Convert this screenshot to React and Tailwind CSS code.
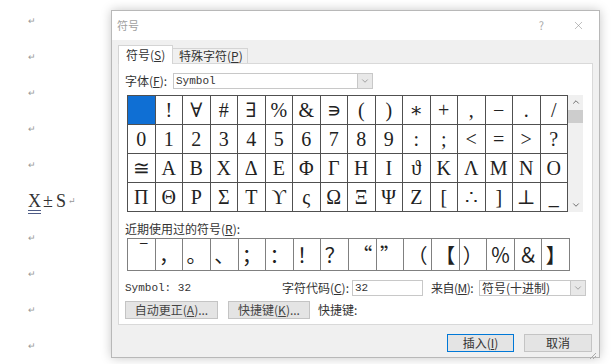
import React from 'react';
import { ChevronDown, ChevronUp, X } from 'lucide-react';

const cjk = "font-['Noto_Sans_CJK_SC',sans-serif]";
const mono = "font-['Liberation_Mono','Noto_Sans_CJK_SC',monospace]";
const serif = "font-['Liberation_Serif','DejaVu_Serif',serif]";

const symbolRows = [
  [' ', '!', '∀', '#', '∃', '%', '&', '∍', '(', ')', '∗', '+', ',', '−', '.', '/'],
  ['0', '1', '2', '3', '4', '5', '6', '7', '8', '9', ':', ';', '<', '=', '>', '?'],
  ['≅', 'Α', 'Β', 'Χ', 'Δ', 'Ε', 'Φ', 'Γ', 'Η', 'Ι', 'ϑ', 'Κ', 'Λ', 'Μ', 'Ν', 'Ο'],
  ['Π', 'Θ', 'Ρ', 'Σ', 'Τ', 'ϒ', 'ς', 'Ω', 'Ξ', 'Ψ', 'Ζ', '[', '∴', ']', '⊥', '_'],
];

const recent = ['ˉ', '，', '。', '、', '；', '：', '！', '？', '“', '”', '（', '【', '）', '％', '＆', '】'];

// Word 文档里的段落标记
function DocColumn() {
  const lines = [0, 1, 2, 3, 4, 'xs', 6, 7, 8, 9];
  return (
    <div className="flex w-[111px] shrink-0 flex-col pl-[28px] pt-[2px]">
      {lines.map((line, i) => (
        <div key={i} className="flex h-[38px] items-center">
          {line === 'xs' ? (
            <span className={`${serif} flex items-center text-[18px] leading-none text-[#333]`}>
              <span className="underline decoration-[#4d5b85] decoration-double underline-offset-[3px]">X</span>
              <span className="ml-[2px]">±</span>
              <span className="ml-[3px]">S</span>
              <span className="ml-[2px] text-[9px] text-[#999]">↵</span>
            </span>
          ) : (
            <span className="text-[9px] leading-none text-[#999]">↵</span>
          )}
        </div>
      ))}
    </div>
  );
}

function SmallButton({ className = '', children }) {
  return (
    <div className={`flex h-[18px] items-center justify-center whitespace-nowrap border border-[#c4c4c4] bg-[#e4e4e4] text-[12px] text-[#444] ${className}`}>
      {children}
    </div>
  );
}

function DropArrow() {
  return (
    <div className="flex h-full w-[15px] items-center justify-center border-l border-[#c8c8c8] bg-[#e8e8e8]">
      <ChevronDown size={10} strokeWidth={1.5} className="text-[#777]" />
    </div>
  );
}

export default function App() {
  return (
    <div className={`${cjk} flex h-[364px] w-[615px] overflow-hidden bg-white`}>
      <DocColumn />

      <div className="mt-[10px] flex h-[348px] w-[489px] shrink-0 flex-col border border-[#b8b8b8] bg-[#f0f0f0] shadow-[0_0_10px_rgba(0,0,0,0.22)]">
        {/* 标题栏 */}
        <div className="flex h-[29px] shrink-0 items-center bg-white pl-[5px] pr-[14px]">
          <span className="text-[11px] text-[#a0a0a0]">符号</span>
          <span className="ml-auto text-[11px] text-[#aaa]">?</span>
          <X size={13} strokeWidth={1} className="ml-[28px] text-[#888]" />
        </div>

        <div className="flex flex-1 flex-col px-[6px]">
          {/* 选项卡 */}
          <div className="mt-[5px] flex h-[18px] items-end">
            <div className="relative z-10 -mb-px flex h-[19px] w-[55px] items-center border border-b-0 border-[#d4d4d4] bg-white pl-[7px] text-[12px] text-[#333]">
              符号(<span className="underline">S</span>)
            </div>
            <div className="flex h-[15px] w-[75px] items-center border border-b-0 border-l-0 border-[#d4d4d4] bg-[#f0f0f0] pl-[6px] text-[12px] text-[#333]">
              特殊字符(<span className="underline">P</span>)
            </div>
          </div>

          {/* 面板 */}
          <div className="flex h-[262px] flex-col border border-[#d9d9d9] bg-white px-[6px] pt-[9px]">
            <div className="flex h-[16px] items-center">
              <span className="w-[48px] text-[12px] text-[#333]">字体(<span className="underline">F</span>):</span>
              <div className="flex h-[16px] w-[200px] items-center border border-[#c8c8c8]">
                <span className={`${mono} flex-1 pl-[2px] text-[11px] text-[#333]`}>Symbol</span>
                <DropArrow />
              </div>
            </div>

            <div className="ml-[2px] mt-[6px] flex">
              <div className="grid w-[441px] grid-cols-16 gap-px border border-[#505050] bg-[#505050]">
                {symbolRows.flat().map((ch, i) => (
                  <div
                    key={i}
                    className={`${serif} flex h-[28px] items-center justify-center text-[20px] leading-none text-[#222] ${i === 0 ? 'bg-[#0f6fd4]' : 'bg-white'}`}
                  >
                    {ch}
                  </div>
                ))}
              </div>
              <div className="flex h-[117px] w-[15px] flex-col items-center bg-[#f0f0f0]">
                <ChevronUp size={10} strokeWidth={2} className="mt-[2px] text-[#555]" />
                <div className="mt-[3px] h-[13px] w-[15px] bg-[#cdcdcd]" />
                <ChevronDown size={10} strokeWidth={2} className="mb-[2px] mt-auto text-[#555]" />
              </div>
            </div>

            <div className="mt-[9px] text-[12px] leading-[16px] text-[#333]">
              近期使用过的符号(<span className="underline">R</span>):
            </div>
            <div className="ml-[2px] mt-px grid w-[443px] grid-cols-16 gap-px border border-[#808080] bg-[#808080]">
              {recent.map((ch, i) => (
                <div
                  key={i}
                  className={`flex h-[31px] text-[20px] leading-none text-[#222] ${i === 0 ? 'items-start justify-end pr-[1px] pt-[1px]' : 'items-center justify-center'} bg-white`}
                >
                  {ch}
                </div>
              ))}
            </div>

            <div className="mt-[9px] flex h-[16px] items-center whitespace-nowrap text-[12px] text-[#333]">
              <span className={`${mono} w-[140px] text-[11px]`}>Symbol: 32</span>
              <span className="w-[84px] text-right">字符代码(<span className="underline">C</span>):</span>
              <div className={`${mono} ml-[3px] flex h-[16px] w-[71px] items-center border border-[#c8c8c8] pl-[2px] text-[11px]`}>32</div>
              <span className="ml-[8px] w-[46px] tracking-[-0.5px]">来自(<span className="underline">M</span>):</span>
              <div className="ml-[2px] flex h-[16px] w-[107px] items-center border border-[#c8c8c8]">
                <span className="flex-1 pl-[2px]">符号(十进制)</span>
                <DropArrow />
              </div>
            </div>

            <div className="mt-[5px] flex items-center">
              <SmallButton className="w-[93px]">自动更正(<span className="underline">A</span>)...</SmallButton>
              <SmallButton className="ml-[10px] w-[82px]">快捷键(<span className="underline">K</span>)...</SmallButton>
              <span className="ml-[8px] text-[12px] text-[#333]">快捷键:</span>
            </div>
          </div>

          {/* 底部按钮 */}
          <div className="mt-[9px] flex justify-end gap-[10px] pr-px">
            <div className="flex h-[18px] w-[67px] items-center justify-center border border-[#0078d7] bg-[#e4e4e4] text-[12px] text-[#333]">
              插入(<span className="underline">I</span>)
            </div>
            <div className="flex h-[18px] w-[68px] items-center justify-center border border-[#c4c4c4] bg-[#e4e4e4] text-[12px] text-[#333]">
              取消
            </div>
          </div>
          <div className="mt-auto flex justify-end pb-[2px]">
            <svg width="8" height="8" viewBox="0 0 8 8" className="-mr-[4px]">
              <path d="M7 1 L1 7 M7 4 L4 7" stroke="#aaa" strokeWidth="1" />
            </svg>
          </div>
        </div>
      </div>
    </div>
  );
}
